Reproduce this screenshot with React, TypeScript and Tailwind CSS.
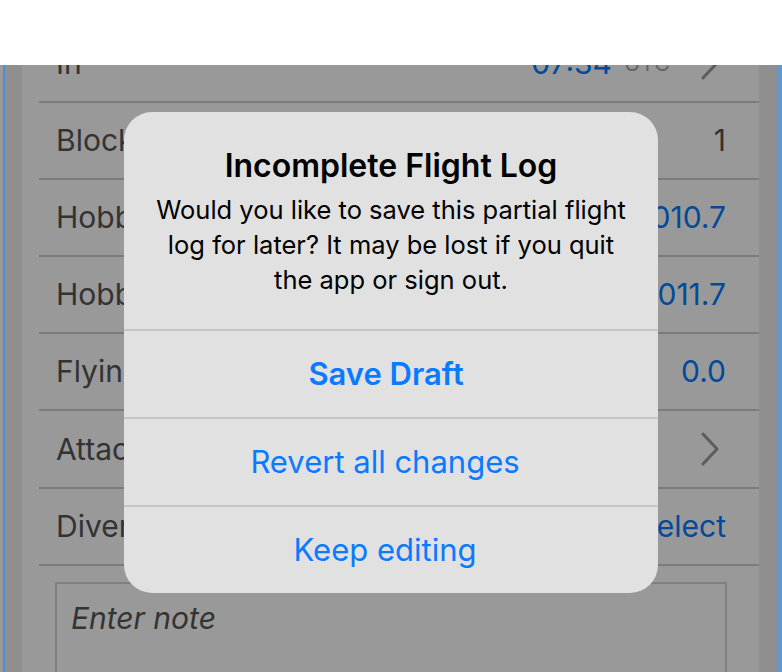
import React from "react";

const rows: { label: string; value?: string; unit?: string; blue?: boolean; chevron?: boolean }[] = [
    { label: "In", value: "07:34", unit: "UTC", blue: true, chevron: true },
    { label: "Block", value: "1" },
    { label: "Hobbs Out", value: "1010.7", blue: true },
    { label: "Hobbs In", value: "1011.7", blue: true },
    { label: "Flying Time", value: "0.0", blue: true },
    { label: "Attachments", chevron: true },
    { label: "Diversion", value: "Select", blue: true },
];

function Chevron() {
    return <svg width="20" height="34" viewBox="0 0 20 34" className="ml-[30px] mr-[6px] shrink-0">
        <path d="M3 2 L17 17 L3 32" fill="none" stroke="#5c5c5c" strokeWidth="3" strokeLinecap="round" strokeLinejoin="round" />
    </svg>
}

function Row(props: { label: string; value?: string; unit?: string; blue?: boolean; chevron?: boolean }) {
    return <div className="flex flex-col">
        <div className="h-[75.2px] flex items-center pl-[34px] pr-[33px]">
            <span className="text-[30px] text-[#333]">{props.label}</span>
            <div className="flex-1" />
            {props.value ? <span className={`text-[30px] ${props.blue ? 'text-[#004a99]' : 'text-[#333]'}`}>{props.value}</span> : null}
            {props.unit ? <span className="text-[22px] text-[#666] ml-[12px]">{props.unit}</span> : null}
            {props.chevron ? <Chevron /> : null}
        </div>
        <div className="h-[2px] ml-[17px] bg-[#7b7b7b]" />
    </div>
}

export default function App() {
    return <div className="relative w-[782px] h-[672px] overflow-hidden bg-[#999] font-['Inter','Noto_Sans',sans-serif]">
        <div className="h-[65px] bg-white" />
        <div className="flex h-[607px]">
            <div className="w-[3px] bg-[#9a9a9a]" />
            <div className="w-[2px] bg-[#4a90d9]" />
            <div className="w-[17px] bg-[#8f8f8f]" />
            <div className="flex-1 overflow-hidden bg-[#999]">
                <div className="-mt-[39.5px]">
                    {rows.map((item, index) => <Row key={index} {...item} />)}
                    <div className="mt-[16px] ml-[33px] mr-[32px] h-[140px] border-2 border-[#808080] pl-[14px] pt-[12px]">
                        <span className="text-[30px] italic text-[#333]">Enter note</span>
                    </div>
                </div>
            </div>
            <div className="w-[19px] bg-[#8f8f8f]" />
            <div className="w-[4px] bg-[#5b9bd5]" />
        </div>

        {/* alert */}
        <div className="absolute left-[124px] top-[112px] w-[534px] h-[481px] rounded-[28px] bg-[#e1e1e1] flex flex-col overflow-hidden">
            <div className="h-[217px] flex flex-col items-center pt-[36px] px-[24px] text-center">
                <div className="text-[32px] leading-[36px] font-semibold text-black">Incomplete Flight Log</div>
                <div className="mt-[8px] w-[480px] text-[25.5px] leading-[35px] text-black">
                    Would you like to save this partial flight log for later? It may be lost if you quit the app or sign out.
                </div>
            </div>
            <div className="h-[2px] bg-[#c6c6c6]" />
            <div className="h-[86px] flex items-center justify-center pr-[10px] text-[31px] font-semibold text-[#0a7aff]">Save Draft</div>
            <div className="h-[2px] bg-[#c6c6c6]" />
            <div className="h-[86px] flex items-center justify-center pr-[12px] text-[31px] text-[#0a7aff]">Revert all changes</div>
            <div className="h-[2px] bg-[#c6c6c6]" />
            <div className="flex-1 flex items-center justify-center pr-[12px] text-[31px] text-[#0a7aff]">Keep editing</div>
        </div>
    </div>
}
